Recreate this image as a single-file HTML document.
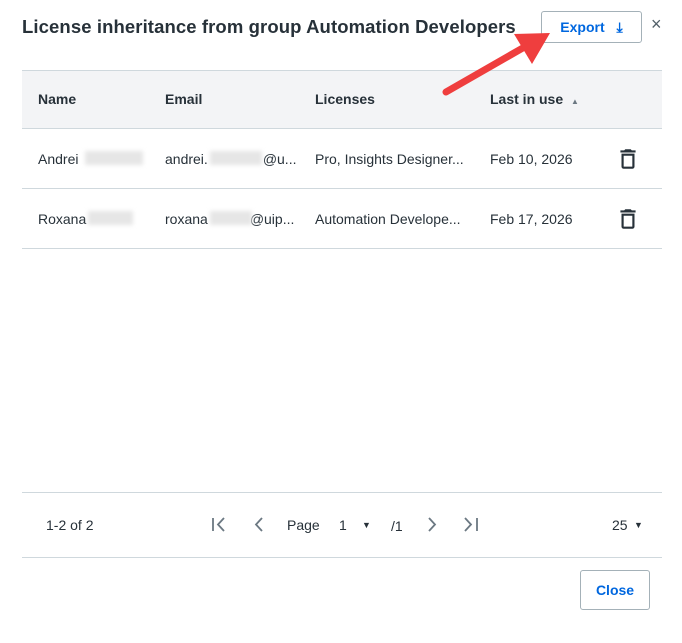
<!DOCTYPE html><html><head><style>
body{margin:0;width:682px;height:643px;background:#fff;font-family:"Liberation Sans",sans-serif;color:#273139;position:relative;overflow:hidden}
.a{position:absolute;white-space:nowrap}
.t{font-size:14px}
.line{position:absolute;left:22px;width:640px;height:1px;background:#cfd8dd}
.blur{position:absolute;background:#e6e6e6;filter:blur(2px);height:14px}
.btn{position:absolute;border:1px solid #a4b1b8;border-radius:3px;color:#0067df;font-size:14px;font-weight:bold;text-align:center;box-sizing:border-box}
.g{color:#6b7882}
</style></head><body>
<div class="a" style="left:22px;top:16px;font-size:18.5px;font-weight:bold;color:#273139;letter-spacing:0.1px">License inheritance from group Automation Developers</div>
<div class="btn" style="left:541px;top:11px;width:101px;height:32px;line-height:30px">Export <span style="margin-left:8px">⤓</span></div>
<div class="a" style="left:651px;top:14px;font-size:18px;color:#526069">×</div>
<div class="a" style="left:22px;top:70px;width:640px;height:58px;background:#f3f4f6;border-top:1px solid #cfd8dd"></div>
<div class="a t" style="left:38px;top:91px;font-weight:bold">Name</div>
<div class="a t" style="left:165px;top:91px;font-weight:bold">Email</div>
<div class="a t" style="left:315px;top:91px;font-weight:bold">Licenses</div>
<div class="a t" style="left:490px;top:91px;font-weight:bold">Last in use <span style="font-size:8px;color:#6b7882;margin-left:4px">▲</span></div>
<div class="line" style="top:128px"></div>
<div class="line" style="top:188px"></div>
<div class="line" style="top:248px"></div>
<div class="a t" style="left:38px;top:151px">Andrei</div><div class="blur" style="left:85px;top:151px;width:58px"></div>
<div class="a t" style="left:165px;top:151px">andrei.<span style="display:inline-block;width:55px"></span>@u...</div><div class="blur" style="left:210px;top:151px;width:52px"></div>
<div class="a t" style="left:315px;top:151px">Pro, Insights Designer...</div>
<div class="a t" style="left:490px;top:151px">Feb 10, 2026</div>
<div class="a t" style="left:38px;top:211px">Roxana</div><div class="blur" style="left:88px;top:211px;width:45px"></div>
<div class="a t" style="left:165px;top:211px">roxana<span style="display:inline-block;width:42px"></span>@uip...</div><div class="blur" style="left:210px;top:211px;width:42px"></div>
<div class="a t" style="left:315px;top:211px">Automation Develope...</div>
<div class="a t" style="left:490px;top:211px">Feb 17, 2026</div>
<svg class="a" style="left:615px;top:146px" width="26" height="26" viewBox="0 0 24 24"><path fill="#273139" d="M6 19c0 1.1.9 2 2 2h8c1.1 0 2-.9 2-2V7H6v12zM8 9h8v10H8V9zm7.5-5l-1-1h-5l-1 1H5v2h14V4z"/></svg>
<svg class="a" style="left:615px;top:206px" width="26" height="26" viewBox="0 0 24 24"><path fill="#273139" d="M6 19c0 1.1.9 2 2 2h8c1.1 0 2-.9 2-2V7H6v12zM8 9h8v10H8V9zm7.5-5l-1-1h-5l-1 1H5v2h14V4z"/></svg>
<div class="line" style="top:492px"></div>
<div class="a t" style="left:46px;top:517px">1-2 of 2</div>
<svg class="a" style="left:0;top:0" width="682" height="643" fill="none" stroke="#6b7882" stroke-width="1.8">
<path d="M213 518v13M224 518l-6 6.5 6 6.5"/>
<path d="M262 518l-6 6.5 6 6.5"/>
<path d="M429 518l6 6.5-6 6.5"/>
<path d="M465 518l6 6.5-6 6.5M477 518v13"/>
</svg>
<div class="a t" style="left:287px;top:517px">Page</div>
<div class="a t" style="left:339px;top:517px">1</div>
<div class="a" style="left:362px;top:520px;font-size:9px">▼</div>
<div class="a t" style="left:391px;top:518px">/1</div>
<div class="a t" style="left:612px;top:517px">25</div>
<div class="a" style="left:634px;top:520px;font-size:9px">▼</div>
<div class="line" style="top:557px"></div>
<div class="btn" style="left:580px;top:570px;width:70px;height:40px;line-height:38px">Close</div>
<svg class="a" style="left:0;top:0" width="682" height="643"><line x1="446" y1="92" x2="528" y2="45" stroke="#ef3e3e" stroke-width="7" stroke-linecap="round"/><polygon points="550,33 514,34 532,64" fill="#ef3e3e"/></svg>
</body></html>
